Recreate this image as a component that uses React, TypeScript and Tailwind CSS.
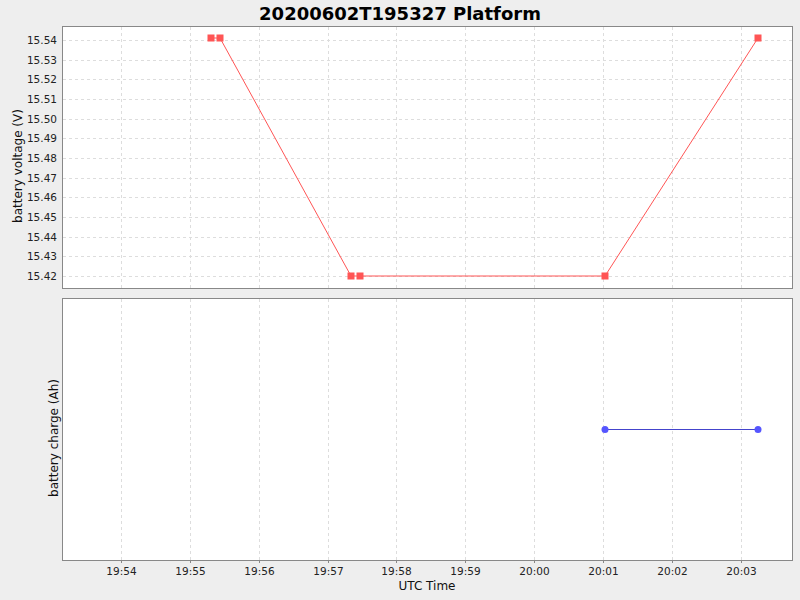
const grid = [121, 190, 259, 328, 396, 465, 534, 603, 672, 741]
const times = ['19:54', '19:55', '19:56', '19:57', '19:58', '19:59', '20:00', '20:01', '20:02', '20:03']
const yTicks = Array.from({ length: 13 }, (_, i) => ({ v: (15.54 - i * 0.01).toFixed(2), y: 40 + i * (236 / 12) }))

export default function App() {
  return (
    <div className="w-[800px] h-[600px] bg-[#eeeeee] flex flex-col" style={{ fontFamily: '"DejaVu Sans", sans-serif' }}>
      <div className="h-[26px] flex items-center justify-center text-[18px] font-bold text-black">
        20200602T195327 Platform
      </div>
      <svg width="800" height="574" viewBox="0 26 800 574" className="block">
        <g fontFamily="DejaVu Sans, sans-serif">
          <rect x="62.5" y="26.5" width="730" height="262" fill="#fff" stroke="#888" />
          {grid.map((x) => (
            <line key={'a' + x} x1={x + 0.5} x2={x + 0.5} y1="27" y2="288" stroke="#ddd" strokeDasharray="3 3" />
          ))}
          {yTicks.map((t) => (
            <g key={t.v}>
              <line x1="63" x2="792" y1={Math.round(t.y) + 0.5} y2={Math.round(t.y) + 0.5} stroke="#ddd" strokeDasharray="3 3" />
              <text x="57" y={t.y + 4} fontSize="10.5" textAnchor="end" fill="#222">{t.v}</text>
            </g>
          ))}
          <text transform="translate(22,166) rotate(-90)" fontSize="12" textAnchor="middle" fill="#111">battery voltage (V)</text>
          <polyline points="211,38 220,38 351,276 360,276 605,276 758,38" fill="none" stroke="#ff5555" />
          {[[211, 38], [220, 38], [351, 276], [360, 276], [605, 276], [758, 38]].map(([x, y]) => (
            <rect key={x} x={x - 3.5} y={y - 3.5} width="7" height="7" fill="#ff5555" />
          ))}

          <rect x="62.5" y="298.5" width="730" height="262" fill="#fff" stroke="#888" />
          {grid.map((x) => (
            <line key={'b' + x} x1={x + 0.5} x2={x + 0.5} y1="299" y2="560" stroke="#ddd" strokeDasharray="3 3" />
          ))}
          <text transform="translate(58,438) rotate(-90)" fontSize="12" textAnchor="middle" fill="#111">battery charge (Ah)</text>
          <line x1="605" x2="758" y1="429.5" y2="429.5" stroke="#4444cc" />
          <circle cx="605" cy="429.5" r="3.5" fill="#5555ff" />
          <circle cx="758" cy="429.5" r="3.5" fill="#5555ff" />

          {grid.map((x, i) => (
            <g key={'t' + x}>
              <line x1={x + 0.5} x2={x + 0.5} y1="561" y2="563" stroke="#888" />
              <text x={x + 0.5} y="575" fontSize="10.5" textAnchor="middle" fill="#222">{times[i]}</text>
            </g>
          ))}
          <text x="427" y="590" fontSize="12" textAnchor="middle" fill="#111">UTC Time</text>
        </g>
      </svg>
    </div>
  )
}
